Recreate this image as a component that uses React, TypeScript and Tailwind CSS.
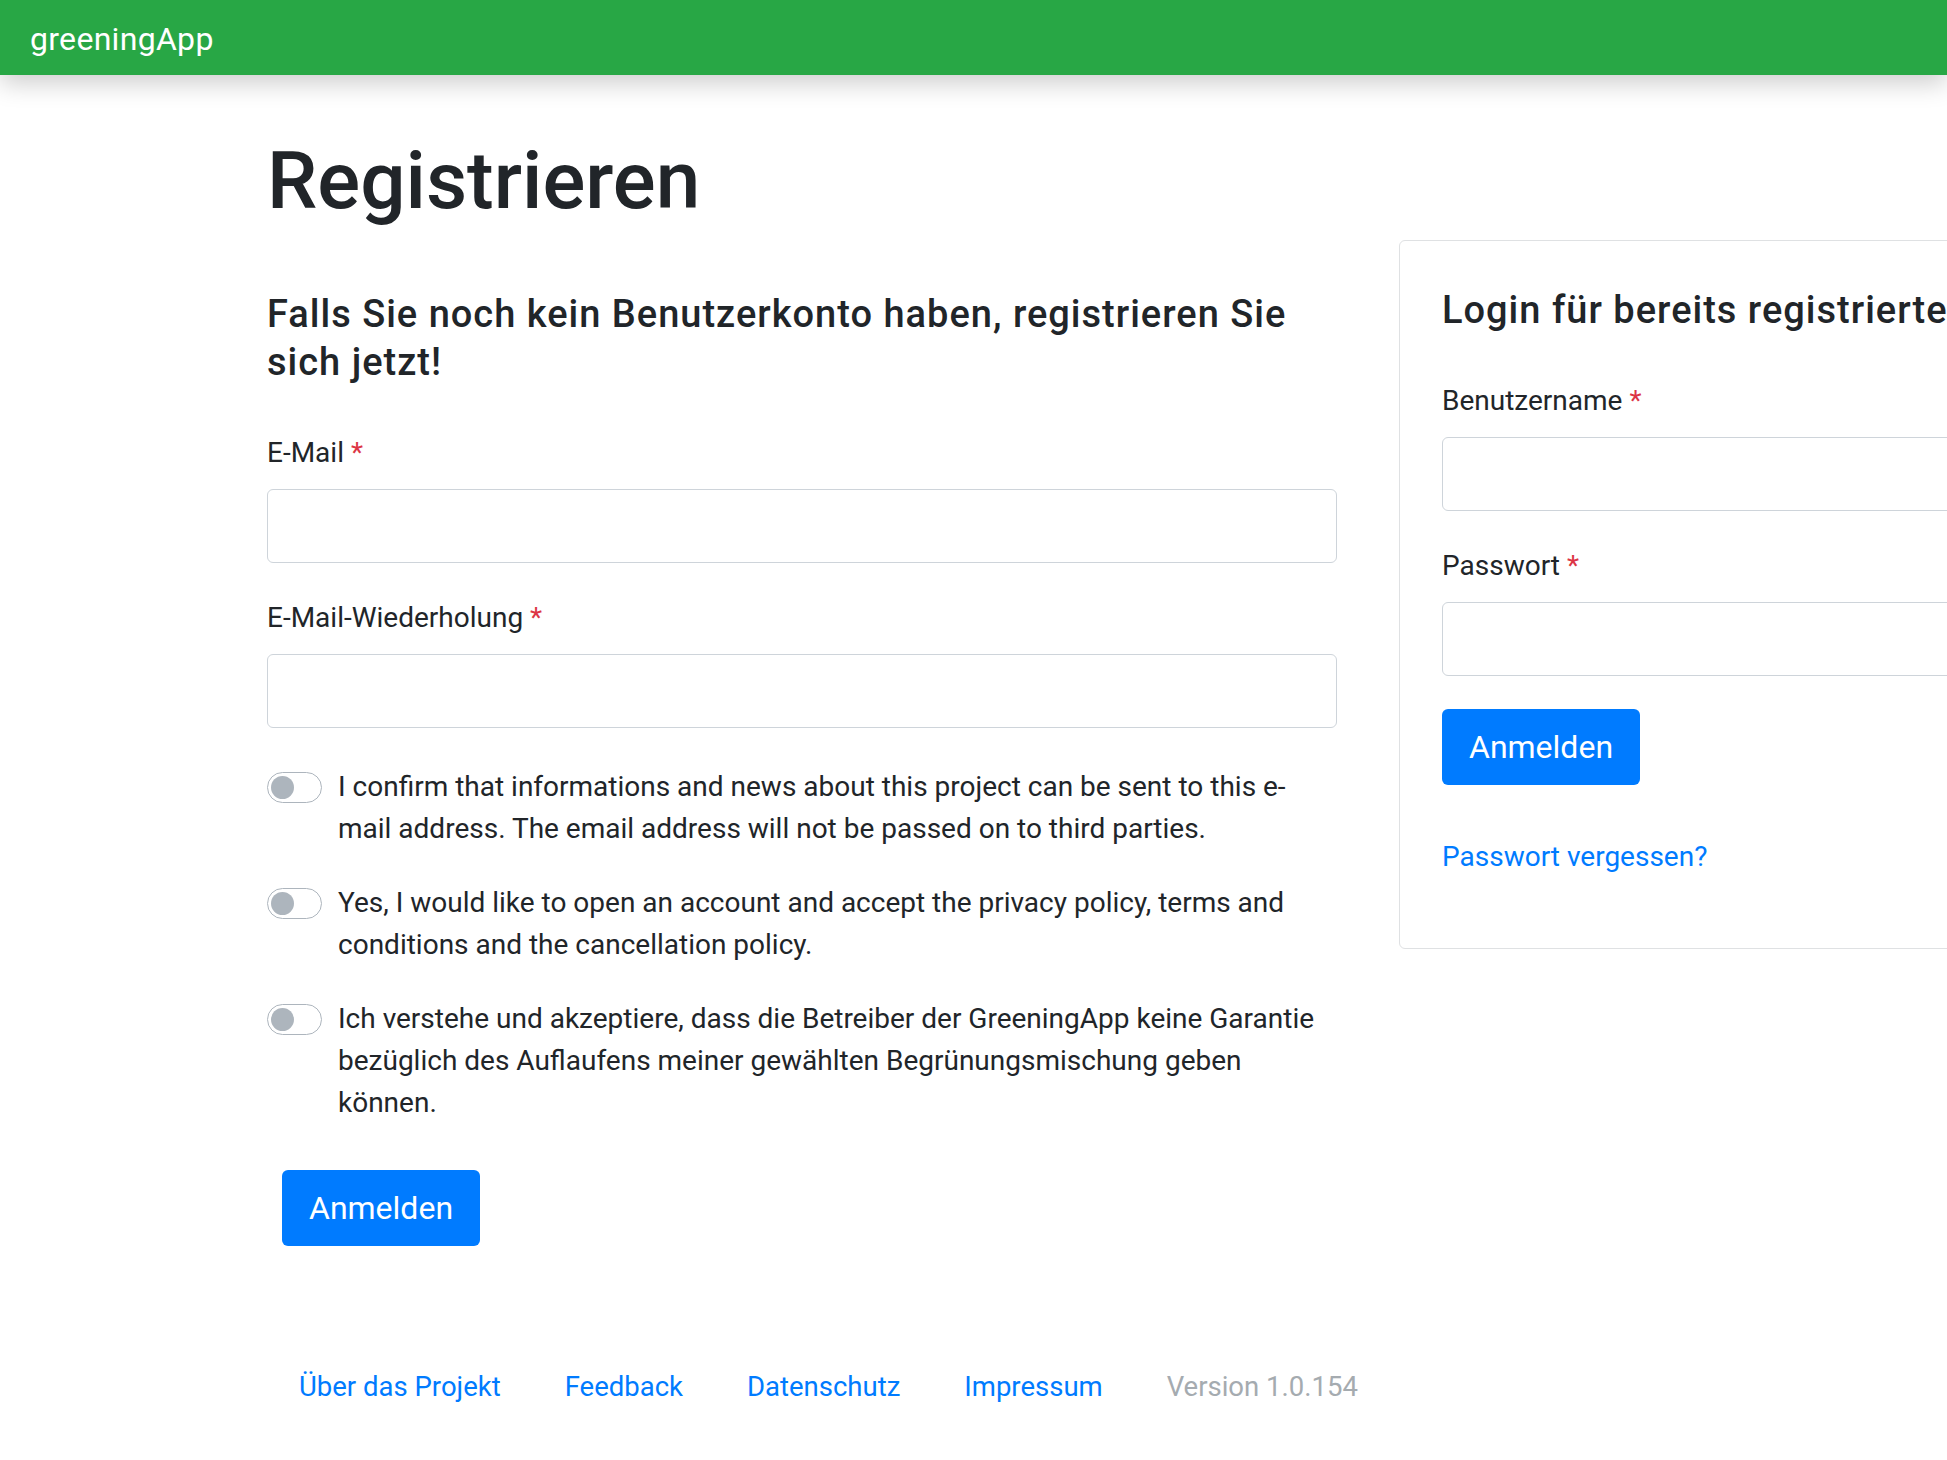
import type { ReactNode } from 'react';

const footerLinks = ['Über das Projekt', 'Feedback', 'Datenschutz', 'Impressum'];

function Required() {
  return <span className="text-[#dc3545]">*</span>;
}

function Field({ label, type = 'text' }: { label: string; type?: string }) {
  return (
    <div className="mb-[34px]">
      <label className="mb-[15px] block">
        {label} <Required />
      </label>
      <input
        type={type}
        className="block h-[74px] w-full rounded-[6px] border border-[#ced4da] bg-white px-4 text-[28px] outline-none"
      />
    </div>
  );
}

function Switch({ children }: { children: ReactNode }) {
  return (
    <div className="mb-[32px] flex gap-[16px]">
      <span className="relative mt-[6px] h-[31px] w-[55px] shrink-0 rounded-full border border-[#adb5bd] bg-white">
        <span className="absolute left-[3px] top-[3px] h-[23px] w-[23px] rounded-full bg-[#adb5bd]" />
      </span>
      <p>{children}</p>
    </div>
  );
}

function SubmitButton({ className = '' }: { className?: string }) {
  return (
    <button
      type="button"
      className={`inline-flex h-[76px] items-center rounded-[6px] bg-[#007bff] px-[27px] text-[32px] text-white ${className}`}
    >
      Anmelden
    </button>
  );
}

export default function App() {
  return (
    <div className="min-h-screen overflow-hidden bg-white font-['Roboto','Liberation_Sans',sans-serif] text-[28px] leading-[42px] text-[#212529]">
      <nav className="relative z-10 flex h-[75px] items-center bg-[#28a745] pl-[30px] pt-[3px] shadow-[0_8px_24px_rgba(0,0,0,0.2)]">
        <span className="text-[32px] tracking-[0.3px] text-white">greeningApp</span>
      </nav>

      <main className="pl-[267px]">
        <h1 className="mt-[58px] text-[80px] font-medium leading-[97px]">Registrieren</h1>

        <div className="mt-[10px] flex items-start">
          <section className="w-[1070px] shrink-0">
            <h3 className="mb-[46px] mt-[50px] text-[38px] font-medium leading-[48px] tracking-[1px]">
              Falls Sie noch kein Benutzerkonto haben, registrieren Sie sich jetzt!
            </h3>
            <Field label="E-Mail" type="email" />
            <Field label="E-Mail-Wiederholung" type="email" />

            <div className="pt-[4px]">
              <Switch>
                I confirm that informations and news about this project can be sent to this e-mail address. The email
                address will not be passed on to third parties.
              </Switch>
              <Switch>
                Yes, I would like to open an account and accept the privacy policy, terms and conditions and the
                cancellation policy.
              </Switch>
              <Switch>
                Ich verstehe und akzeptiere, dass die Betreiber der GreeningApp keine Garantie bezüglich des
                Auflaufens meiner gewählten Begrünungsmischung geben können.
              </Switch>
            </div>

            <SubmitButton className="ml-[15px] mt-[14px]" />

            <footer className="mt-[120px] flex pb-10 text-[27.5px]">
              {footerLinks.map((link) => (
                <a key={link} href="#" className="shrink-0 whitespace-nowrap px-[32px] text-[#007bff]">
                  {link}
                </a>
              ))}
              <span className="shrink-0 whitespace-nowrap px-[32px] text-[#a5abb0]">Version 1.0.154</span>
            </footer>
          </section>

          <section className="ml-[62px] w-[860px] shrink-0 rounded-[6px] border border-[#dfe1e3] px-[42px] pb-[70px] pt-[45px]">
            <h3 className="mb-[46px] whitespace-nowrap text-[38px] font-medium leading-[48px] tracking-[1px]">
              Login für bereits registrierte Benutzer
            </h3>
            <Field label="Benutzername" />
            <Field label="Passwort" type="password" />
            <SubmitButton className="-mt-px" />
            <a href="#" className="mt-[51px] block text-[#007bff]">
              Passwort vergessen?
            </a>
          </section>
        </div>
      </main>
    </div>
  );
}
